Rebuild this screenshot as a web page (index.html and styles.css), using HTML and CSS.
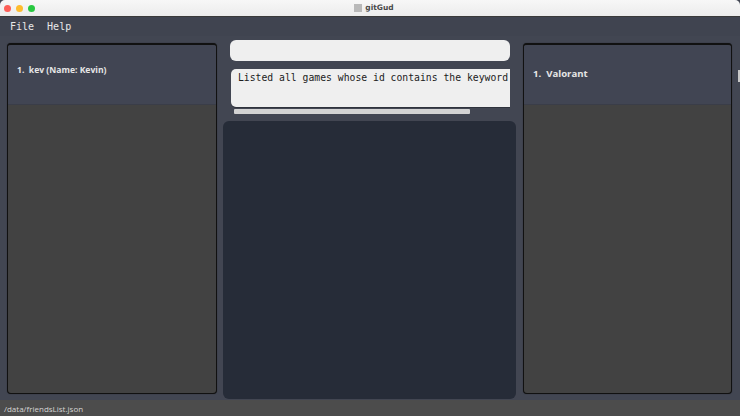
FILE: index.html
```html
<!DOCTYPE html>
<html>
<head>
<meta charset="utf-8">
<link rel="stylesheet" href="styles.css">
</head>
<body>
<div class="window">
  <div class="titlebar">
    <div class="lights">
      <span class="light red"></span>
      <span class="light yellow"></span>
      <span class="light green"></span>
    </div>
    <div class="title"><span class="app-icon"></span>gitGud</div>
  </div>
  <div class="menubar">
    <span class="menu-item">File</span>
    <span class="menu-item">Help</span>
  </div>
  <div class="main">
    <div class="list-panel">
      <div class="card small"><span class="card-text">1.&nbsp;&nbsp;kev (Name: Kevin)</span></div>
    </div>
    <div class="center">
      <div class="command-box"></div>
      <div class="result-box">Listed all games whose id contains the keyword</div>
      <div class="hscroll"></div>
      <div class="detail-panel"></div>
    </div>
    <div class="list-panel right">
      <div class="card large"><span class="card-text">1.&nbsp;&nbsp;Valorant</span></div>
    </div>
    <div class="edge-scroll"></div>
  </div>
  <div class="statusbar">/data/friendsList.json</div>
</div>
</body>
</html>
```
FILE: styles.css
```css
* { box-sizing: border-box; }
html, body { margin: 0; padding: 0; }
body {
  width: 740px;
  height: 416px;
  overflow: hidden;
  background: #424652;
  font-family: "Open Sans", "DejaVu Sans", sans-serif;
}
.window {
  display: flex;
  flex-direction: column;
  width: 740px;
  height: 416px;
}
.titlebar {
  position: relative;
  height: 17px;
  background: linear-gradient(#f7f7f7, #ececec);
  border-bottom: 1px solid #3a3a3a;
  border-radius: 5px 5px 0 0;
  display: flex;
  align-items: center;
  justify-content: center;
  flex-shrink: 0;
}
.lights {
  position: absolute;
  left: 4px;
  top: 5px;
  display: flex;
  gap: 5px;
}
.light {
  width: 7px;
  height: 7px;
  border-radius: 50%;
  display: block;
}
.red { background: #fd5e57; }
.yellow { background: #febc2e; }
.green { background: #28c840; }
.title {
  display: flex;
  align-items: center;
  gap: 3px;
  font-family: "DejaVu Sans", sans-serif;
  font-size: 7.5px;
  font-weight: bold;
  color: #4a4a4a;
  margin-left: 8px;
  margin-top: -1px;
}
.app-icon {
  width: 8px;
  height: 8px;
  background: #b9b9b9;
  display: block;
}
.menubar {
  height: 19px;
  background: #404450;
  display: flex;
  align-items: center;
  gap: 13px;
  padding-left: 10px;
  font-family: "DejaVu Sans Mono", monospace;
  font-size: 10px;
  color: #e8e8e8;
  flex-shrink: 0;
}
.main {
  position: relative;
  flex: 1;
  display: flex;
  align-items: flex-start;
  background: #424652;
  height: 364px;
}
.list-panel {
  margin-top: 7px;
  margin-left: 7px;
  width: 210px;
  height: 351px;
  background: #424242;
  border: 1px solid #111;
  border-top-width: 2px;
  border-radius: 4px;
  overflow: hidden;
  box-shadow: 0 0 1px rgba(0,0,0,0.6);
  flex-shrink: 0;
}
.list-panel.right {
  margin-left: 7px;
  width: 209px;
}
.card {
  height: 60px;
  background: #414553;
  border-bottom: 1px solid #3a3d48;
  padding-left: 9px;
  color: #e6e6e6;
  font-weight: bold;
}
.card.small {
  font-size: 8.6px;
  line-height: 12px;
  padding-top: 19px;
}
.card.large {
  font-size: 9.6px;
  line-height: 13px;
  padding-top: 22px;
}
.center {
  margin-left: 6px;
  width: 293px;
  display: flex;
  flex-direction: column;
  flex-shrink: 0;
}
.command-box {
  margin: 4px 6px 0 7px;
  height: 21px;
  background: #efefef;
  border-radius: 6px;
}
.result-box {
  margin: 8px 6px 0 8px;
  height: 38px;
  background: #efefef;
  border-radius: 5px 0 0 5px;
  overflow: hidden;
  white-space: nowrap;
  padding: 3px 0 0 7px;
  box-shadow: 0 1px 0 #2f333c;
  font-family: "DejaVu Sans Mono", monospace;
  font-size: 9.75px;
  line-height: 12px;
  color: #1c1c1c;
}
.hscroll {
  margin: 2px 0 0 11px;
  width: 236px;
  height: 5px;
  background: #d3d3d3;
  border-radius: 1px;
}
.detail-panel {
  margin-top: 7px;
  height: 278px;
  background: #262c38;
  border-radius: 6px;
}
.edge-scroll {
  position: absolute;
  right: 0;
  top: 34px;
  width: 2px;
  height: 12px;
  background: #c8c8c8;
}
.statusbar {
  height: 16px;
  background: #4c4c4c;
  color: #d4d4d4;
  font-size: 8px;
  padding-left: 4px;
  display: flex;
  align-items: center;
  padding-top: 1px;
  flex-shrink: 0;
}
```
